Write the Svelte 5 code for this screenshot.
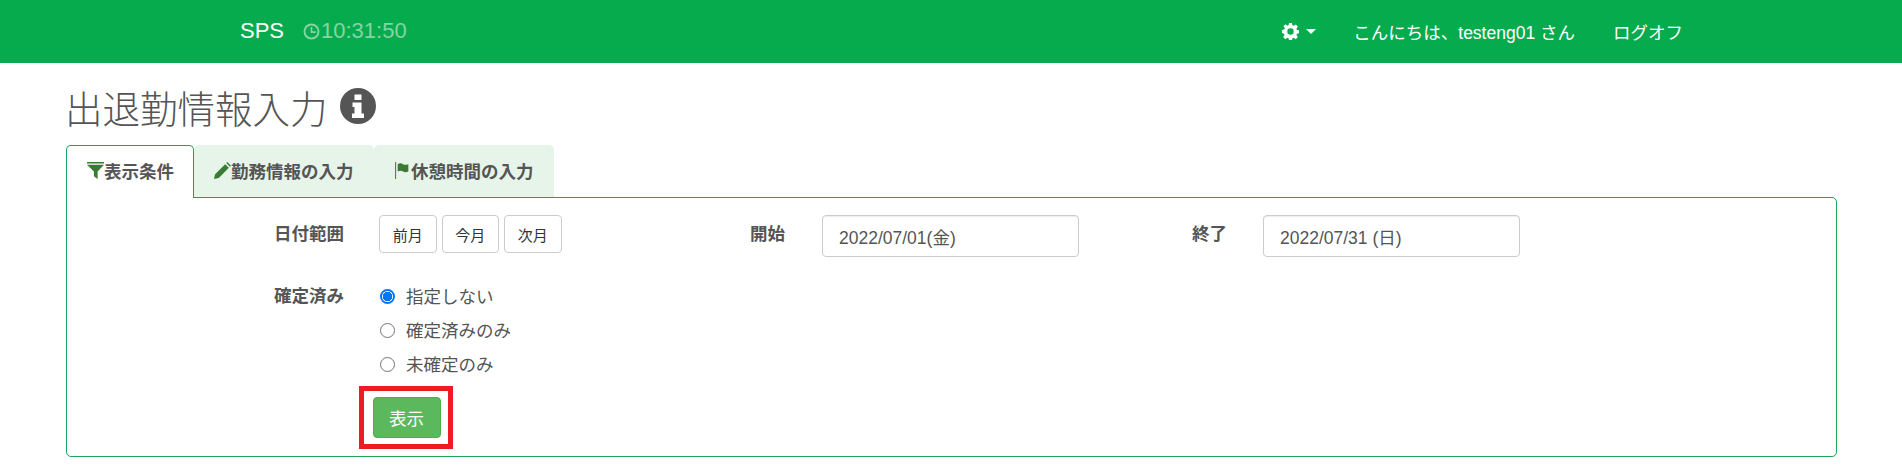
<script>
  const tabs = [
    { label: "表示条件", icon: "filter", active: true },
    { label: "勤務情報の入力", icon: "pencil", active: false },
    { label: "休憩時間の入力", icon: "flag", active: false }
  ];
  const months = ["前月", "今月", "次月"];
  const options = ["指定しない", "確定済みのみ", "未確定のみ"];
  let picked = $state(options[0]);
</script>

<nav class="navbar">
  <span class="brand">SPS</span>
  <span class="clock">
    <svg class="clock-icon" viewBox="0 0 16 16" width="17" height="17">
      <circle cx="8" cy="8" r="6.6" fill="none" stroke="currentColor" stroke-width="1.8" />
      <path d="M8 3.800V8.600H12" fill="none" stroke="currentColor" stroke-width="1.6" />
    </svg>10:31:50
  </span>
  <span class="nav-right">
    <span class="cog">
      <svg viewBox="0 0 16 16" width="17" height="17">
        <path fill="#fff" fill-rule="evenodd" d="M6.6 0h2.8l.4 2.2 1.2.5L12.9 1.4l2 2-1.3 1.9.5 1.2 2.2.4v2.8l-2.2.4-.5 1.2 1.3 1.9-2 2-1.9-1.3-1.2.5-.4 2.2H6.6l-.4-2.2-1.2-.5-1.9 1.3-2-2 1.3-1.9-.5-1.2L0 9.400V6.600l2.200-.4.500-1.200L1.400 3.100l2-2L5 2.700l1.200-.5zM8 5a3 3 0 1 0 0 6 3 3 0 0 0 0-6z" />
      </svg>
      <i class="caret"></i>
    </span>
    <span class="greeting">こんにちは、testeng01 さん</span>
    <span class="logoff">ログオフ</span>
  </span>
</nav>

<main class="page">
  <h2 class="title">
    出退勤情報入力
    <svg class="info" viewBox="0 0 36 36" width="36" height="36">
      <circle cx="18" cy="18" r="18" fill="#555" />
      <path fill="#fff" d="M14.500 6.500h7v5.500h-7zM12.500 14.500h9v11h2.500v4.500H12v-4.500h2.500v-6.500h-2z" />
    </svg>
  </h2>

  <ul class="tabs">
    {#each tabs as tab}
      <li class="tab" class:active={tab.active}>
        <svg class="tab-icon" viewBox="0 0 16 16" width="17" height="17">
          {#if tab.icon === "filter"}
            <path d="M0 0h16v1.500H0zM0 2.500h16L10 9v7L6.500 13.500V9z" />
          {:else if tab.icon === "pencil"}
            <path d="M0 16l1-4.500L10.500 2l3.500 3.500L4.500 15zM11.500 1l1-1 3.500 3.500-1 1z" />
          {:else}
            <path d="M1 0h1v16H1z" fill="#6b6b3a" />
            <path d="M3.500 2c2-1.200 3.500-.8 5 0 1.500.7 3 .8 5 0v7c-2 .9-3.500.8-5 0-1.500-.8-3-1.100-5 0z" />
          {/if}
        </svg>{tab.label}
      </li>
    {/each}
  </ul>

  <section class="panel">
    <div class="row-top">
      <span class="label first">日付範囲</span>
      <div class="months">
        {#each months as m}
          <button class="month">{m}</button>
        {/each}
      </div>
      <span class="label start">開始</span>
      <input class="date" value="2022/07/01(金)" />
      <span class="label end">終了</span>
      <input class="date" value="2022/07/31 (日)" />
    </div>

    <div class="row-radio">
      <span class="label first">確定済み</span>
      <div class="radios">
        {#each options as opt}
          <label class="radio">
            <input type="radio" name="confirmed" value={opt} bind:group={picked} />
            {opt}
          </label>
        {/each}
      </div>
    </div>

    <div class="highlight">
      <button class="show">表示</button>
    </div>
  </section>
</main>

<style>
  :global(body) {
    font-family: "Liberation Sans", "Noto Sans CJK JP", sans-serif;
    font-size: 17.5px;
    color: #555;
    background: #fff;
  }
  .navbar {
    display: flex;
    align-items: center;
    height: 63px;
    padding: 0 0 1px 240px;
    box-sizing: border-box;
    background: #06ab4e;
    color: #fff;
  }
  .brand {
    font-size: 22px;
  }
  .clock {
    display: flex;
    align-items: center;
    margin-left: 19px;
    font-size: 22px;
    color: rgba(255, 255, 255, 0.5);
  }
  .clock-icon {
    margin-right: 1px;
  }
  .nav-right {
    display: flex;
    align-items: center;
    margin-left: auto;
    margin-right: 219px;
  }
  .cog {
    display: flex;
    align-items: center;
  }
  .caret {
    width: 0;
    height: 0;
    margin-left: 7px;
    border: 5px solid transparent;
    border-top-color: #fff;
    border-bottom: 0;
  }
  .greeting {
    margin-left: 37px;
  }
  .logoff {
    margin-left: 38px;
  }
  .page {
    padding: 0 65px 0 66px;
  }
  .title {
    display: flex;
    align-items: center;
    gap: 12px;
    box-sizing: border-box;
    height: 82px;
    margin: 0 0 0 -1px;
    padding-top: 4px;
    font-size: 37.5px;
    font-weight: 300;
    color: #555;
  }
  .tabs {
    display: flex;
    margin: 0;
    padding: 0;
    list-style: none;
  }
  .tab {
    display: flex;
    align-items: flex-start;
    box-sizing: border-box;
    height: 52px;
    padding: 14px 20.5px 0 20px;
    background: #e6f4ea;
    border-radius: 5px 5px 0 0;
    font-weight: 700;
    line-height: 26px;
    color: #555;
  }
  .tab.active {
    position: relative;
    z-index: 1;
    margin-bottom: -1px;
    height: 53px;
    background: #fff;
    border: 1px solid #1ba657;
    border-bottom: 0;
    padding: 13px 19px 0 20px;
  }
  .tab-icon {
    margin-top: 3px;
    fill: #3a7a35;
  }
  .panel {
    box-sizing: border-box;
    height: 260px;
    padding: 17px 0 0 207px;
    border: 1px solid #1ba657;
    border-radius: 0 5px 5px 5px;
  }
  .row-top {
    display: flex;
    align-items: flex-start;
  }
  .label {
    font-weight: 700;
    line-height: 38px;
    color: #555;
  }
  .label.first {
    width: 105px;
  }
  .label.start {
    width: 72px;
    margin-left: 188.500px;
  }
  .label.end {
    width: 71px;
    margin-left: 113px;
  }
  .months {
    display: flex;
    gap: 5px;
  }
  .month {
    box-sizing: border-box;
    width: 57.500px;
    height: 38px;
    padding: 0;
    background: #fff;
    border: 1px solid #ccc;
    border-radius: 4px;
    font: inherit;
    font-size: 15px;
    color: #333;
  }
  .date {
    box-sizing: border-box;
    width: 257px;
    height: 42px;
    padding: 0 16px;
    background: #fff;
    border: 1px solid #ccc;
    border-radius: 4px;
    box-shadow: inset 0 1px 1px rgba(0, 0, 0, 0.075);
    font: inherit;
    color: #555;
  }
  .row-radio {
    display: flex;
    margin-top: 21px;
  }
  .row-radio .label {
    line-height: 36px;
  }
  .radios {
    display: flex;
    flex-direction: column;
    margin-left: 1px;
  }
  .radio {
    display: flex;
    align-items: center;
    gap: 11px;
    height: 34px;
    color: #555;
  }
  .radio input {
    appearance: none;
    box-sizing: border-box;
    width: 15px;
    height: 15px;
    margin: 2px 0 0;
    background: #fff;
    border: 1px solid #767676;
    border-radius: 50%;
  }
  .radio input:checked {
    border: 2px solid #0075ff;
    background: radial-gradient(circle, #0075ff 0 4.5px, #fff 5px);
  }
  .highlight {
    display: flex;
    justify-content: center;
    box-sizing: border-box;
    width: 94px;
    height: 63px;
    margin: 6px 0 0 85px;
    padding: 6px 0 0 1px;
    border: 5px solid #ed1c24;
  }
  .show {
    box-sizing: border-box;
    width: 68px;
    height: 41px;
    padding: 0;
    background: #5cb85c;
    border: 1px solid #4cae4c;
    border-radius: 4px;
    font: inherit;
    color: #fff;
  }
</style>
